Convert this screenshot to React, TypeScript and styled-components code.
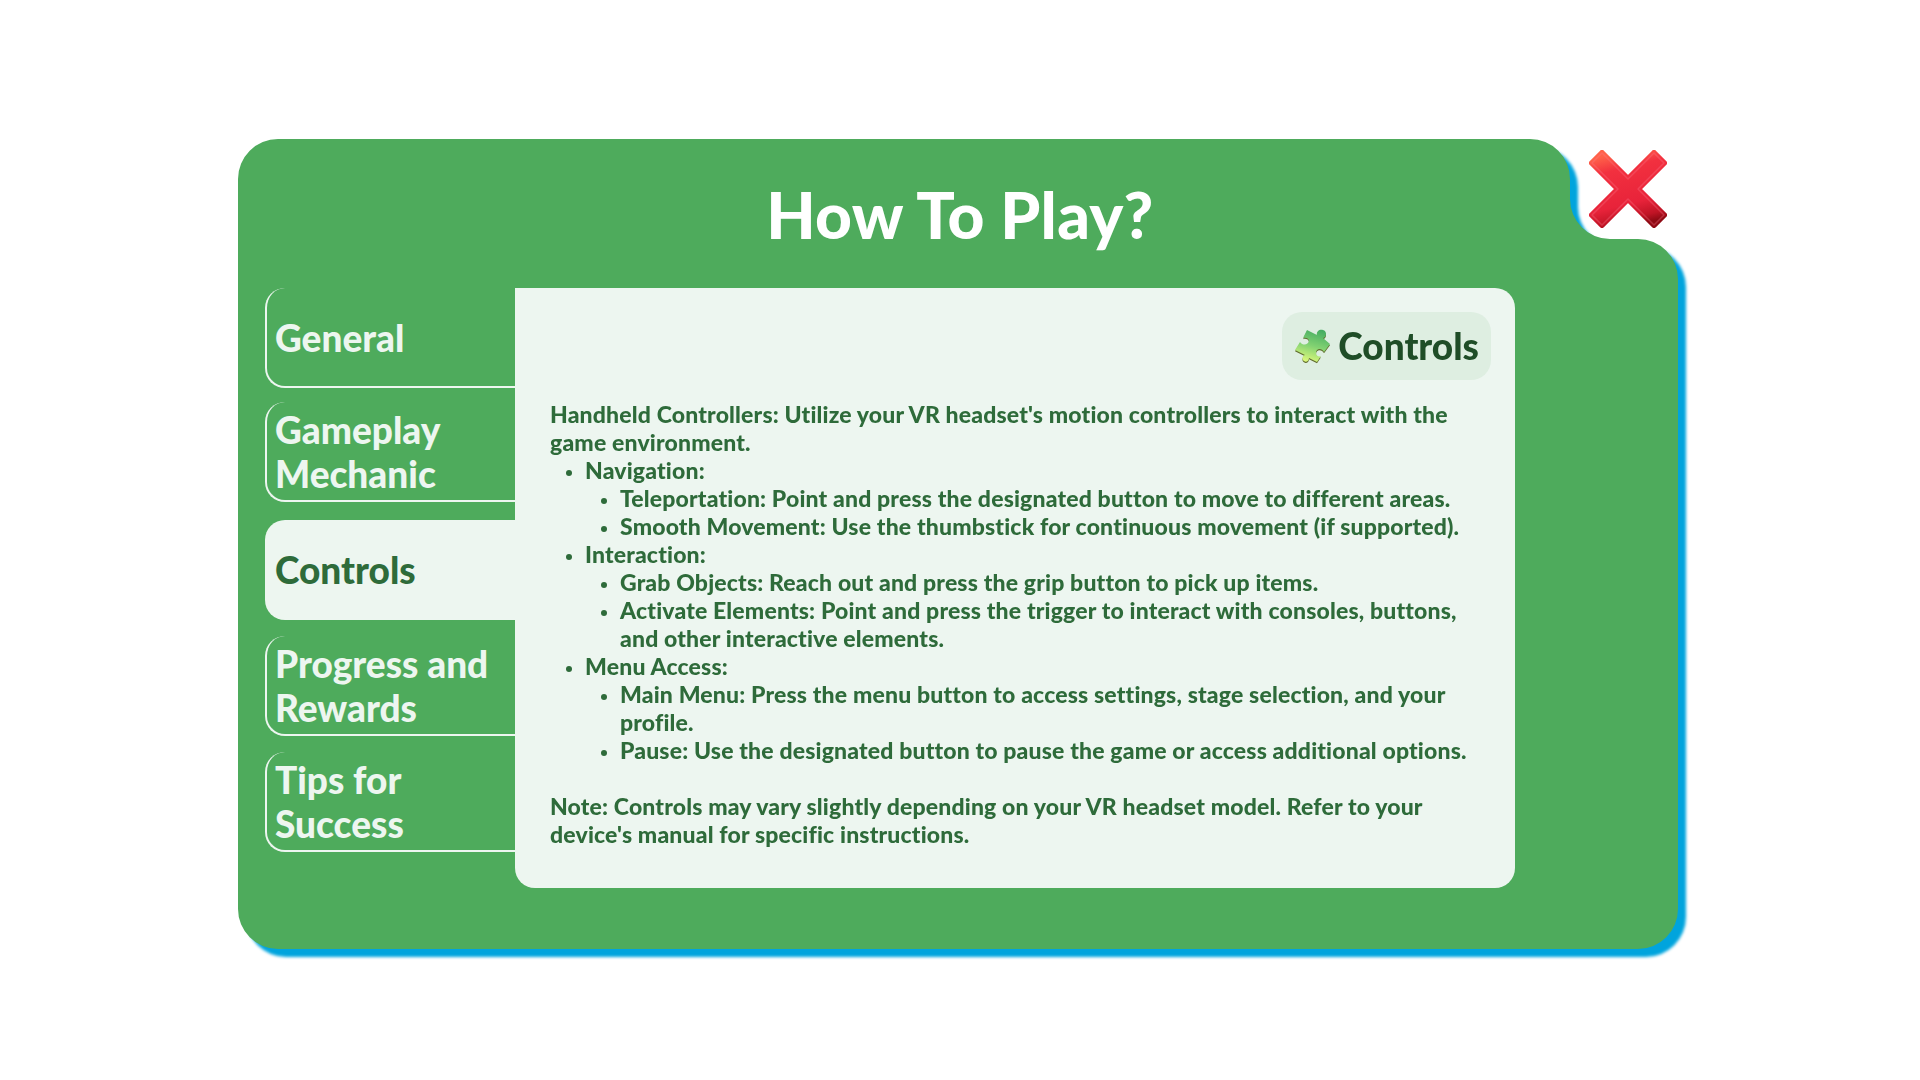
import React from 'react';
import styled, { createGlobalStyle } from 'styled-components';

const GlobalStyle = createGlobalStyle`
    html, body {
        margin: 0;
        padding: 0;
        background: #fff;
    }
    body {
        min-height: 100vh;
        overflow: hidden;
        font-family: 'Lato', 'Noto Sans', sans-serif;
        font-weight: 900;
    }
    #root {
        padding-top: 139px;
    }
`;

const Modal = styled.div`
    position: relative;
    width: 1440px;
    margin-left: 238px;
`;

const ShadowWrap = styled.div`
    padding: 0 20px 20px 0;
    margin: 0 -20px -20px 0;
    filter: drop-shadow(8px 8px 1.5px #00a4dd);
`;

const Panel = styled.div`
    height: 810px;
    background: #4eab5c;
    clip-path: path('M40 0 H1292 A40 40 0 0 1 1332 40 V60 A40 40 0 0 0 1372 100 H1400 A40 40 0 0 1 1440 140 V770 A40 40 0 0 1 1400 810 H40 A40 40 0 0 1 0 770 V40 A40 40 0 0 1 40 0 Z');
`;

const Title = styled.h1`
    display: flex;
    align-items: center;
    justify-content: center;
    height: 149px;
    margin: 0;
    padding: 2px 0 0 4px;
    box-sizing: border-box;
    color: #fff;
    font-size: 64px;
    font-weight: 900;
    letter-spacing: 0.3px;
`;

const Body = styled.div`
    display: flex;
    padding-left: 27px;
`;

const Tabs = styled.ul`
    display: flex;
    flex-direction: column;
    width: 250px;
    margin: 0;
    padding: 0;
    list-style: none;
`;

const Tab = styled.li<{ $active?: boolean; $top: number }>`
    display: flex;
    align-items: center;
    height: 100px;
    margin-top: ${(p) => p.$top}px;
    padding: 2px 0 0 8px;
    box-sizing: border-box;
    border-radius: 20px 0 0 20px;
    border-left: 2px solid #edf6f0;
    border-bottom: 2px solid #edf6f0;
    color: #edf6f0;
    font-size: 37px;
    line-height: 44px;

    ${(p) => p.$active && `
        border: 0;
        padding: 0 0 0 10px;
        background: #edf6f0;
        color: #2e6b3a;
    `}
`;

const Content = styled.div`
    width: 1000px;
    height: 600px;
    padding: 24px 35px 0;
    box-sizing: border-box;
    border-radius: 0 20px 20px 20px;
    background: #edf6f0;
    color: #2e6b3a;
    font-size: 23px;
    line-height: 28px;
    letter-spacing: 0.16px;
`;

const BadgeRow = styled.div`
    display: flex;
    justify-content: flex-end;
    margin: 0 -11px 20px 0;
`;

const Badge = styled.div`
    display: flex;
    align-items: center;
    gap: 7px;
    height: 68px;
    padding: 0 12px;
    border-radius: 20px;
    background: #deeee1;
    color: #1f4d27;
    font-size: 37px;
    letter-spacing: 0;
`;

const Paragraph = styled.p`
    margin: 0;
`;

const List = styled.ul`
    margin: 0;
    padding: 0 0 0 35px;
    list-style: disc;

    li::marker {
        font-size: 0.8em;
    }
`;

const Note = styled.p`
    margin: 28px 0 0;
`;

const CloseButton = styled.button`
    position: absolute;
    top: 11px;
    left: 1351px;
    width: 78px;
    height: 78px;
    padding: 0;
    border: 0;
    background: none;
`;

const tabs = [
    { label: 'General', top: 0 },
    { label: 'Gameplay Mechanic', top: 14 },
    { label: 'Controls', top: 18, active: true },
    { label: 'Progress and Rewards', top: 16 },
    { label: 'Tips for Success', top: 16 },
];

function CrossIcon() {
    const shape = 'M13 3 L39 29 L65 3 L75 13 L49 39 L75 65 L65 75 L39 49 L13 75 L3 65 L29 39 L3 13 Z';
    return (
        <svg width="78" height="78" viewBox="0 0 78 78">
            <defs>
                <linearGradient id="crossFill" x1="0.35" y1="0" x2="0.6" y2="1">
                    <stop offset="0" stopColor="#ff6249" />
                    <stop offset="0.22" stopColor="#f2303f" />
                    <stop offset="0.7" stopColor="#e8233a" />
                    <stop offset="0.9" stopColor="#c01425" />
                    <stop offset="1" stopColor="#8f0a14" />
                </linearGradient>
            </defs>
            <path d={shape} fill="url(#crossFill)" stroke="url(#crossFill)" strokeWidth="6" strokeLinejoin="round" />
            <path d={shape} fill="none" stroke="#ff7d93" strokeOpacity="0.3" strokeWidth="1.5" strokeLinejoin="round" />
        </svg>
    );
}

function PuzzleIcon() {
    const shape =
        'M13 2 L23 7 C22 3 26 1 29 2 C33 3 33 9 29 10 L36 16 L30 24 C28 20 22 20 22 25 C22 28 25 29 27 28 L23 34 L15 30 C15 33 12 35 10 33 C7 31 9 27 11 27 L1 22 L6 14 C9 18 14 17 15 13 C15 10 11 9 9 10 Z';
    return (
        <svg width="37" height="37" viewBox="0 0 37 37">
            <defs>
                <linearGradient id="puzzleFill" x1="0.65" y1="0" x2="0.35" y2="1">
                    <stop offset="0" stopColor="#46ad62" />
                    <stop offset="0.5" stopColor="#82d272" />
                    <stop offset="1" stopColor="#def97c" />
                </linearGradient>
            </defs>
            <path d={shape} transform="translate(0 1.2)" fill="#5f6b2c" />
            <path d={shape} fill="url(#puzzleFill)" />
        </svg>
    );
}

export default function App() {
    return (
        <>
            <GlobalStyle />
            <Modal>
                <ShadowWrap>
                    <Panel>
                        <Title>How To Play?</Title>
                        <Body>
                            <Tabs>
                                {tabs.map((tab) => (
                                    <Tab key={tab.label} $active={tab.active} $top={tab.top}>
                                        {tab.label}
                                    </Tab>
                                ))}
                            </Tabs>
                            <Content>
                                <BadgeRow>
                                    <Badge>
                                        <PuzzleIcon />
                                        Controls
                                    </Badge>
                                </BadgeRow>
                                <Paragraph>
                                    Handheld Controllers: Utilize your VR headset's motion controllers to interact with the game environment.
                                </Paragraph>
                                <List>
                                    <li>
                                        Navigation:
                                        <List>
                                            <li>Teleportation: Point and press the designated button to move to different areas.</li>
                                            <li>Smooth Movement: Use the thumbstick for continuous movement (if supported).</li>
                                        </List>
                                    </li>
                                    <li>
                                        Interaction:
                                        <List>
                                            <li>Grab Objects: Reach out and press the grip button to pick up items.</li>
                                            <li>Activate Elements: Point and press the trigger to interact with consoles, buttons, and other interactive elements.</li>
                                        </List>
                                    </li>
                                    <li>
                                        Menu Access:
                                        <List>
                                            <li>Main Menu: Press the menu button to access settings, stage selection, and your profile.</li>
                                            <li>Pause: Use the designated button to pause the game or access additional options.</li>
                                        </List>
                                    </li>
                                </List>
                                <Note>
                                    Note: Controls may vary slightly depending on your VR headset model. Refer to your device's manual for specific instructions.
                                </Note>
                            </Content>
                        </Body>
                    </Panel>
                </ShadowWrap>
                <CloseButton aria-label="Close">
                    <CrossIcon />
                </CloseButton>
            </Modal>
        </>
    );
}
